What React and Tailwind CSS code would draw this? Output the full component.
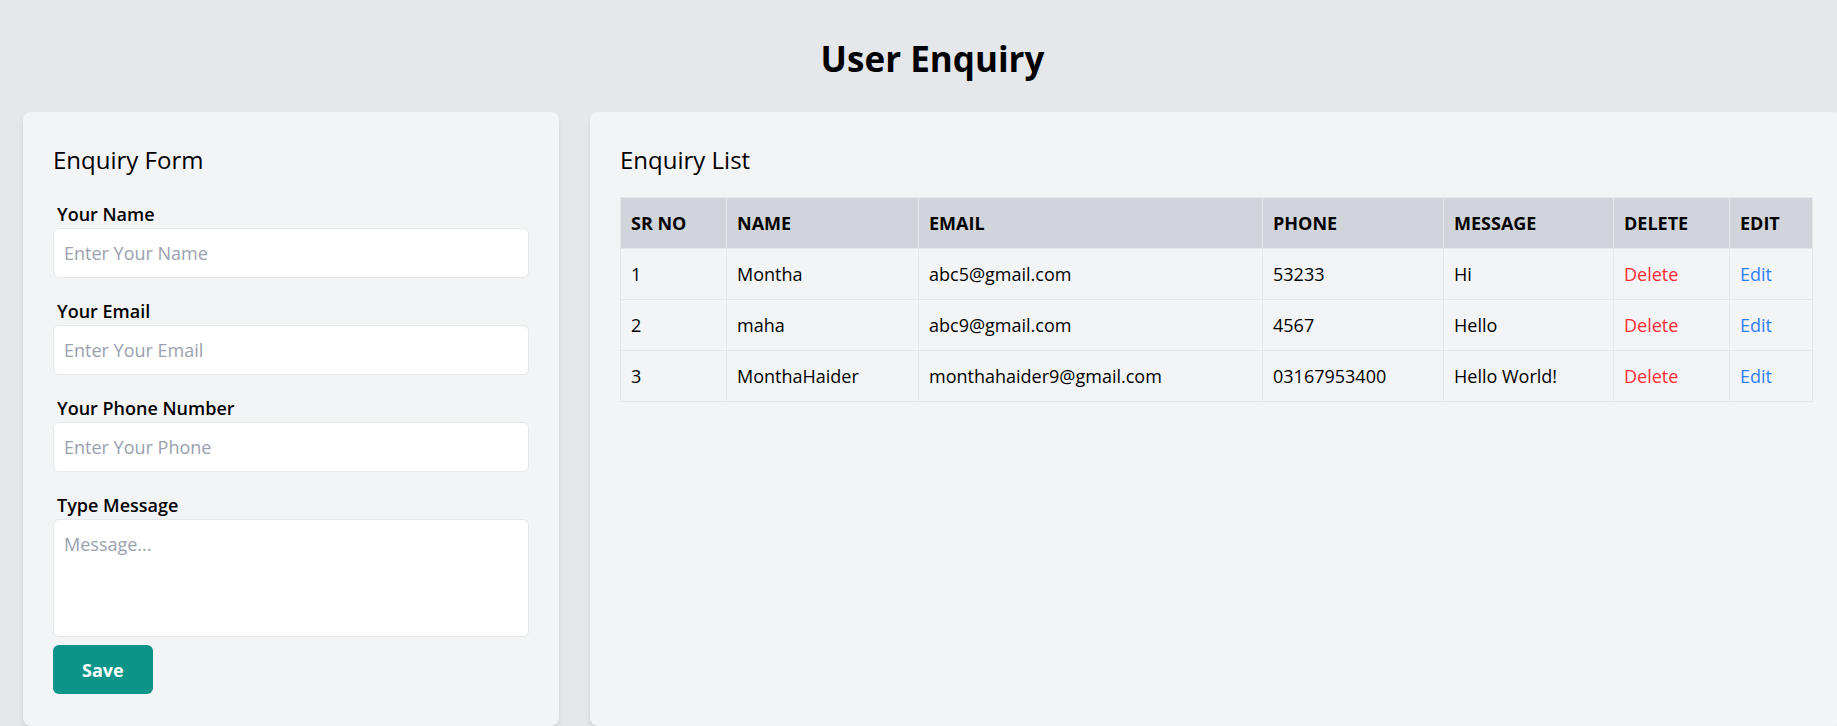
import React from "react";

const rows = [
  { id: 1, name: "Montha", email: "abc5@gmail.com", phone: "53233", message: "Hi" },
  { id: 2, name: "maha", email: "abc9@gmail.com", phone: "4567", message: "Hello" },
  { id: 3, name: "MonthaHaider", email: "monthahaider9@gmail.com", phone: "03167953400", message: "Hello World!" },
];

function Field({ label, placeholder }) {
  return (
    <div className="mb-[19px] flex flex-col">
      <label className="ml-1 text-lg leading-7 font-semibold">{label}</label>
      <input
        placeholder={placeholder}
        className="h-[50px] rounded-md border border-gray-200 bg-white px-2.5 py-3 text-lg leading-6 placeholder:text-gray-400 outline-none"
      />
    </div>
  );
}

export default function App() {
  return (
    <div className="min-h-screen w-full overflow-hidden bg-[#e5e7eb] font-['Open_Sans',sans-serif] text-black">
      <div className="w-[1865px]">
        <h1 className="pt-[39px] mb-[33px] text-center text-[35px] leading-10 font-bold">User Enquiry</h1>
        <div className="grid grid-cols-[536px_1252px] gap-[31px] px-[23px]">
          <div className="rounded-lg bg-[#f3f4f6] px-[30px] py-8 shadow-md">
            <h2 className="mb-6 text-2xl leading-8 font-medium">Enquiry Form</h2>
            <Field label="Your Name" placeholder="Enter Your Name" />
            <Field label="Your Email" placeholder="Enter Your Email" />
            <Field label="Your Phone Number" placeholder="Enter Your Phone" />
            <div className="flex flex-col">
              <label className="ml-1 text-lg leading-7 font-semibold">Type Message</label>
              <textarea
                placeholder="Message..."
                className="h-[118px] resize-none rounded-md border border-gray-200 bg-white px-2.5 py-3 text-lg leading-6 placeholder:text-gray-400 outline-none"
              />
            </div>
            <button className="mt-2 flex h-[49px] items-center rounded-md bg-[#0d9488] px-[29px] text-lg leading-7 font-bold text-white">
              Save
            </button>
          </div>
          <div className="rounded-lg bg-[#f3f4f6] px-[30px] py-8 shadow-md">
            <h2 className="mb-[21px] text-2xl leading-8 font-medium">Enquiry List</h2>
            <table className="w-full table-fixed border-collapse text-left text-lg leading-7">
              <colgroup>
                <col className="w-[106px]" />
                <col className="w-[192px]" />
                <col className="w-[344px]" />
                <col className="w-[181px]" />
                <col className="w-[170px]" />
                <col className="w-[116px]" />
                <col className="w-[83px]" />
              </colgroup>
              <thead>
                <tr className="bg-[#d1d5db]">
                  {["SR NO", "NAME", "EMAIL", "PHONE", "MESSAGE", "DELETE", "EDIT"].map((h) => (
                    <th key={h} className="border border-gray-200 px-2.5 py-[11px] font-bold uppercase">
                      {h}
                    </th>
                  ))}
                </tr>
              </thead>
              <tbody>
                {rows.map((r) => (
                  <tr key={r.id}>
                    <td className="border border-gray-200 px-2.5 py-[11px]">{r.id}</td>
                    <td className="border border-gray-200 px-2.5 py-[11px]">{r.name}</td>
                    <td className="border border-gray-200 px-2.5 py-[11px]">{r.email}</td>
                    <td className="border border-gray-200 px-2.5 py-[11px]">{r.phone}</td>
                    <td className="border border-gray-200 px-2.5 py-[11px]">{r.message}</td>
                    <td className="border border-gray-200 px-2.5 py-[11px] text-red-500">Delete</td>
                    <td className="border border-gray-200 px-2.5 py-[11px] text-blue-500">Edit</td>
                  </tr>
                ))}
              </tbody>
            </table>
          </div>
        </div>
      </div>
    </div>
  );
}
